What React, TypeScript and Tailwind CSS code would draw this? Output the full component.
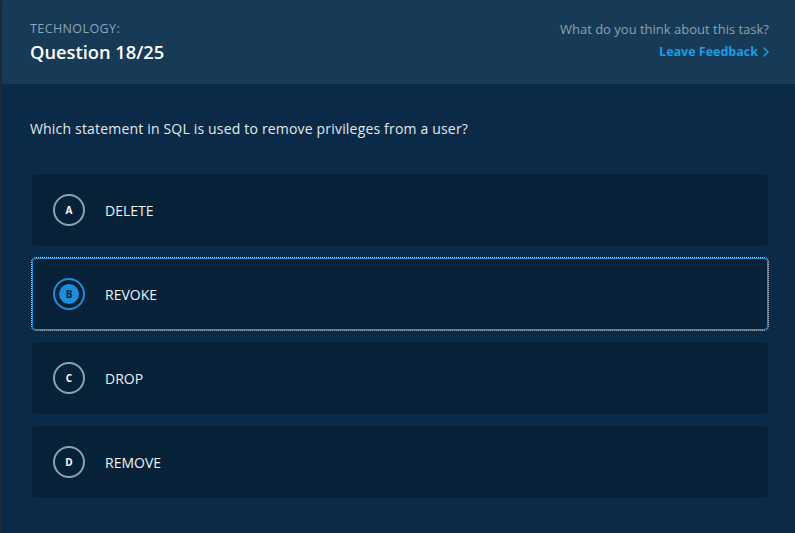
import React from "react";

const options = [
  { key: "A", label: "DELETE" },
  { key: "B", label: "REVOKE" },
  { key: "C", label: "DROP" },
  { key: "D", label: "REMOVE" },
];

export default function App() {
  const selected = "B";

  return (
    <div
      className="w-[795px] h-[533px] overflow-hidden bg-[#0a2a47] border-l-2 border-[#1d2a35] flex flex-col"
      style={{ fontFamily: '"Open Sans", "Noto Sans", sans-serif' }}
    >
      {/* Header */}
      <div className="h-[84px] shrink-0 bg-[#173a57] rounded-tl-[3px] flex items-start justify-between pl-[28px] pr-[26px] pt-[21px]">
        <div>
          <div className="text-[12.5px] leading-[16px] tracking-[0.4px] text-[#8ca5b8]">TECHNOLOGY:</div>
          <div className="text-[18.3px] leading-[24px] mt-[3px] font-semibold text-white">Question 18/25</div>
        </div>
        <div className="flex flex-col items-end">
          <div className="text-[13px] leading-[16px] text-[#8ba2b4]">What do you think about this task?</div>
          <button className="mt-[7px] flex items-center gap-[5px] text-[12.5px] leading-[16px] font-bold text-[#1c9be6]">
            Leave Feedback
            <svg width="6" height="10" viewBox="0 0 6 10" fill="none">
              <path d="M1 1l4 4-4 4" stroke="#1c9be6" strokeWidth="1.5" strokeLinecap="round" strokeLinejoin="round" />
            </svg>
          </button>
        </div>
      </div>

      {/* Body */}
      <div className="pl-[28px] pr-[27px] pt-[36px]">
        <p className="text-[14px] tracking-[0.18px] leading-[18px] text-[#e3e9ee]">
          Which statement in SQL is used to remove privileges from a user?
        </p>

        <div className="mt-[36px] ml-[2px] flex flex-col gap-[12px]">
          {options.map((o) => {
            const active = o.key === selected;
            return (
              <div
                key={o.key}
                className={
                  active
                    ? "h-[72px] rounded-[4px] bg-[#072238] border border-[#1c8fdb] outline outline-1 outline-dotted outline-white/80 flex items-center pl-[20px]"
                    : "h-[72px] rounded-[4px] bg-[#072238] border border-transparent flex items-center pl-[20px]"
                }
              >
                {active ? (
                  <div className="w-[32px] h-[32px] rounded-full border-2 border-[#1c8fdb] flex items-center justify-center">
                    <div className="w-[20px] h-[20px] rounded-full bg-[#1c8fdb] flex items-center justify-center text-[10px] font-bold text-[#072238]">
                      {o.key}
                    </div>
                  </div>
                ) : (
                  <div className="w-[32px] h-[32px] rounded-full border-2 border-[#8aa4b6] flex items-center justify-center text-[10px] font-bold text-white">
                    {o.key}
                  </div>
                )}
                <span className="ml-[20px] text-[14px] text-[#eef2f5]">{o.label}</span>
              </div>
            );
          })}
        </div>
      </div>
    </div>
  );
}
